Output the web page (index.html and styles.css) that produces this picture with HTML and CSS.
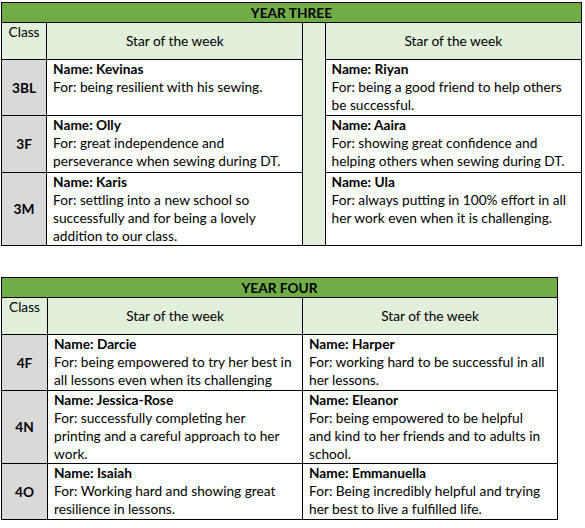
FILE: index.html
```html
<!DOCTYPE html>
<html>
<head>
<meta charset="utf-8">
<link rel="stylesheet" href="styles.css">
</head>
<body>
<table class="stars three">
  <colgroup>
    <col class="c-class"><col class="c-main"><col class="c-gap"><col class="c-main">
  </colgroup>
  <tr class="year"><th colspan="4">YEAR THREE</th></tr>
  <tr class="head">
    <td class="cls-h">Class</td>
    <td class="sotw">Star of the week</td>
    <td class="gap" rowspan="4"></td>
    <td class="sotw">Star of the week</td>
  </tr>
  <tr class="r56">
    <td class="cls">3BL</td>
    <td class="entry"><b>Name: Kevinas</b><br>For: being resilient with his sewing.</td>
    <td class="entry"><b>Name: Riyan</b><br>For: being a good friend to help others<br>be successful.</td>
  </tr>
  <tr class="r57">
    <td class="cls">3F</td>
    <td class="entry"><b>Name: Olly</b><br>For: great independence and<br>perseverance when sewing during DT.</td>
    <td class="entry"><b>Name: Aaira</b><br>For: showing great confidence and<br>helping others when sewing during DT.</td>
  </tr>
  <tr class="r72">
    <td class="cls">3M</td>
    <td class="entry"><b>Name: Karis</b><br>For: settling into a new school so<br>successfully and for being a lovely<br>addition to our class.</td>
    <td class="entry"><b>Name: Ula</b><br>For: always putting in 100% effort in all<br>her work even when it is challenging.</td>
  </tr>
</table>

<table class="stars four">
  <colgroup>
    <col class="c-class2"><col class="c-main2"><col class="c-main2">
  </colgroup>
  <tr class="year"><th colspan="3">YEAR FOUR</th></tr>
  <tr class="head">
    <td class="cls-h">Class</td>
    <td class="sotw">Star of the week</td>
    <td class="sotw">Star of the week</td>
  </tr>
  <tr class="r56">
    <td class="cls">4F</td>
    <td class="entry"><b>Name: Darcie</b><br>For: being empowered to try her best in<br>all lessons even when its challenging</td>
    <td class="entry"><b>Name: Harper</b><br>For: working hard to be successful in all<br>her lessons.</td>
  </tr>
  <tr class="r73">
    <td class="cls">4N</td>
    <td class="entry"><b>Name: Jessica-Rose</b><br>For: successfully completing her<br>printing and a careful approach to her<br>work.</td>
    <td class="entry"><b>Name: Eleanor</b><br>For: being empowered to be helpful<br>and kind to her friends and to adults in<br>school.</td>
  </tr>
  <tr class="r56">
    <td class="cls">4O</td>
    <td class="entry"><b>Name: Isaiah</b><br>For: Working hard and showing great<br>resilience in lessons.</td>
    <td class="entry"><b>Name: Emmanuella</b><br>For: Being incredibly helpful and trying<br>her best to live a fulfilled life.</td>
  </tr>
</table>
</body>
</html>
```
FILE: styles.css
```css
html, body {
  margin: 0;
  padding: 0;
  background: #fff;
}
body {
  padding: 2px 0 0 1px;
  font-family: Lato, "Liberation Sans", sans-serif;
  font-size: 13.7px;
  line-height: 18px;
  color: #000;
}
.stars {
  border-collapse: collapse;
  table-layout: fixed;
}
.three { width: 581px; }
.four { width: 557px; margin-top: 31px; }
.c-class { width: 45px; }
.c-main { width: 256px; }
.c-gap { width: 22px; }
.c-class2 { width: 46px; }
.c-main2 { width: 255px; }
.stars td, .stars th {
  border: 1px solid #000;
  padding: 0 6px;
  vertical-align: top;
  text-align: left;
}
.entry { white-space: nowrap; overflow: hidden; }
.year th {
  background: #70ad47;
  height: 19px;
  padding: 0;
  text-align: center;
  font-weight: bold;
  vertical-align: middle;
}
.head td { background: #e2efda; height: 36px; }
.head .cls-h { text-align: center; padding: 0; }
.head .sotw { text-align: center; vertical-align: middle; }
.gap { background: #d9d9d9; }
.cls {
  background: #d9d9d9;
  font-weight: bold;
  text-align: center !important;
  vertical-align: middle !important;
  padding: 0 !important;
}
.r56 td { height: 55px; }
.r57 td { height: 56px; }
.r72 td { height: 71px; }
.r73 td { height: 72px; }
```
